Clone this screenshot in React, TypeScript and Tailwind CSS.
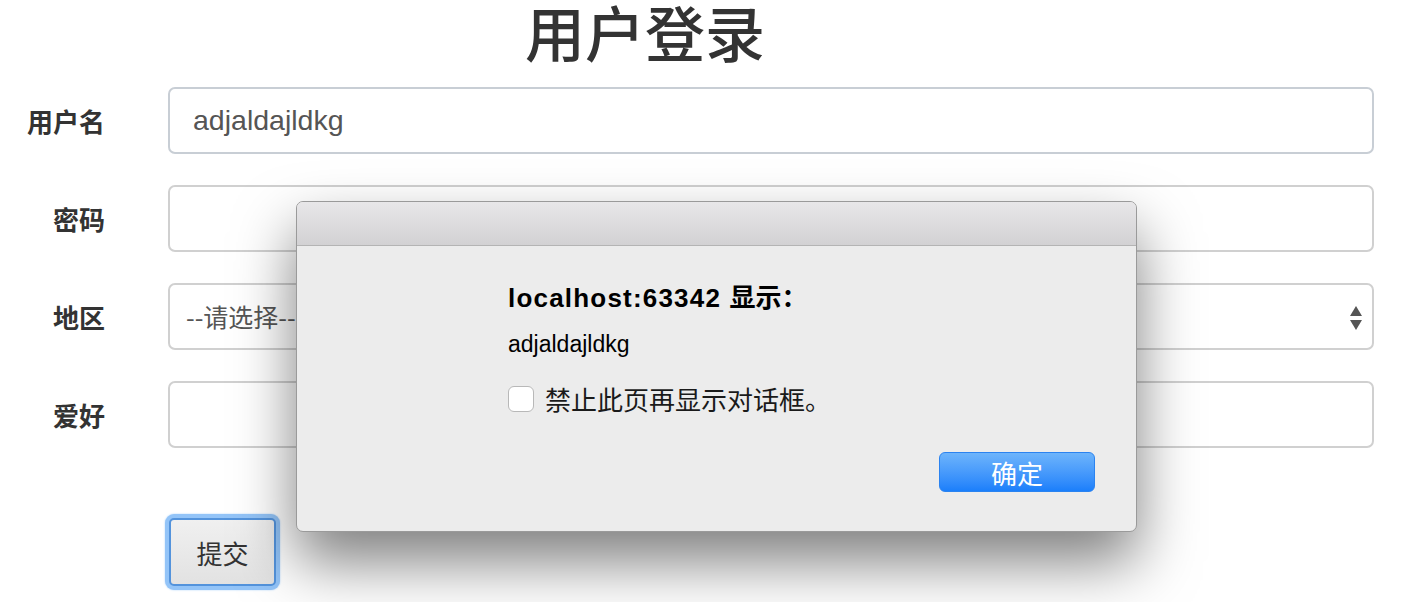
import React from "react";

function Row({ label, first, children }: { label: string; first?: boolean; children?: React.ReactNode }) {
  return (
    <div className="flex items-center">
      <div className="w-[105px] text-right text-[26px] font-bold text-[#333]">{label}</div>
      <div
        className={
          first
            ? "ml-[63px] w-[1206px] h-[67px] rounded-[7px] border-2 border-[#c8ced5] bg-white flex items-center relative"
            : "ml-[63px] w-[1206px] h-[67px] rounded-[7px] border-2 border-[#d0d0d0] bg-white flex items-center relative"
        }
      >
        {children}
      </div>
    </div>
  );
}

export default function App() {
  return (
    <div className="relative w-[1408px] h-[602px] bg-white overflow-hidden font-['Noto_Sans_CJK_SC','Noto_Sans',sans-serif]">
      <h1 className="h-[62px] leading-[62px] pl-[525px] text-[60px] font-medium text-[#333]">用户登录</h1>
      <div className="mt-[25px] flex flex-col gap-[31px]">
        <Row label="用户名" first>
          <span className="pl-[23px] text-[28.5px] text-[#555] font-['Liberation_Sans',sans-serif]">adjaldajldkg</span>
        </Row>
        <Row label="密码" />
        <Row label="地区">
          <span className="pl-[16px] text-[25px] text-[#555]">--请选择--</span>
          <svg className="absolute right-[10px] top-[21px]" width="12" height="24" viewBox="0 0 12 24">
            <path d="M6 0 L12 10 L0 10 Z" fill="#555" />
            <path d="M0 14 L12 14 L6 24 Z" fill="#555" />
          </svg>
        </Row>
        <Row label="爱好" />
      </div>
      <div className="ml-[165px] mt-[66px] w-[115px] h-[76px] rounded-[9px] bg-[#93c4f8] shadow-[0_0_2px_#a8d0fa] p-[4px]">
        <div className="w-full h-full rounded-[5px] border-2 border-[#5393dc] bg-gradient-to-b from-[#f0f0f0] to-[#e2e2e2] flex items-center justify-center text-[26px] text-[#333]">
          提交
        </div>
      </div>

      <div className="absolute left-[296px] top-[201px] w-[841px] h-[331px] rounded-[7px] bg-[#ececec] border border-[#9a9a9a] shadow-[0_30px_60px_rgba(0,0,0,0.5)] overflow-hidden">
        <div className="h-[44px] bg-gradient-to-b from-[#e8e7e9] to-[#d2d1d3] border-b border-[#b4b4b4]" />
        <div className="pl-[211px] pt-[34px]">
          <div className="text-[26px] font-bold text-black leading-[32px] tracking-[1.2px] font-['Liberation_Sans','Noto_Sans_CJK_SC',sans-serif]">
            localhost:63342 <span className="tracking-normal font-['Noto_Sans_CJK_SC',sans-serif]">显示：</span>
          </div>
          <div className="mt-[16px] text-[23px] text-black leading-[28px] font-['Liberation_Sans',sans-serif]">adjaldajldkg</div>
          <div className="mt-[28px] flex items-center h-[26px]">
            <div className="w-[26px] h-[26px] rounded-[6px] border border-[#b8b8b8] bg-white" />
            <span className="ml-[11px] text-[26px] leading-[26px] text-[#1a1a1a]">禁止此页再显示对话框。</span>
          </div>
        </div>
        <div className="flex justify-end pr-[41px] mt-[40px]">
          <div className="w-[156px] h-[40px] rounded-[6px] border border-[#2b83f0] bg-gradient-to-b from-[#6db4fb] to-[#1a7ffb] flex items-center justify-center text-[26px] text-white">
            确定
          </div>
        </div>
      </div>
    </div>
  );
}
